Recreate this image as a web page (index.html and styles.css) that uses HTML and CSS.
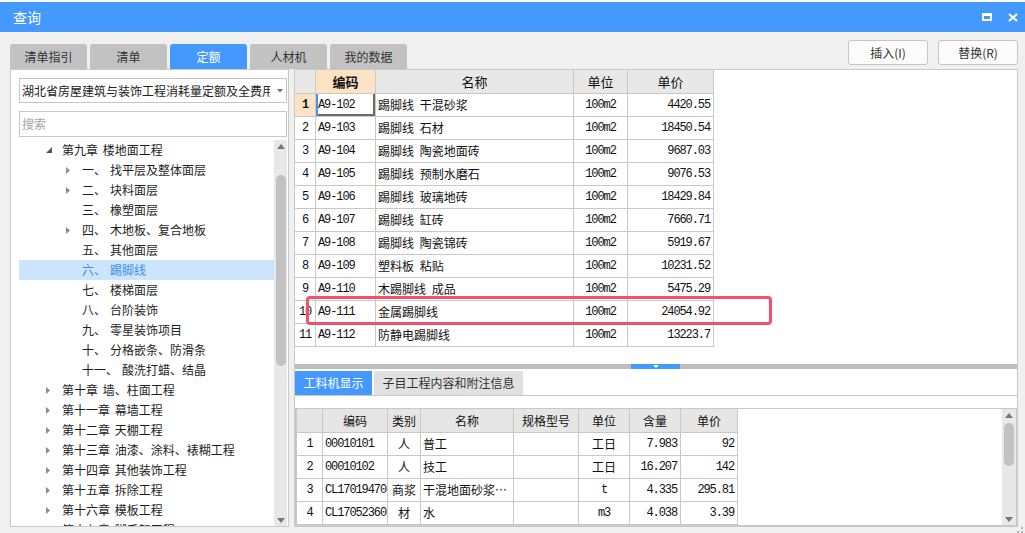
FILE: index.html
```html
<!DOCTYPE html>
<html lang="zh-CN">
<head>
<meta charset="utf-8">
<title>查询</title>
<link rel="stylesheet" href="styles.css">
</head>
<body>
<div class="window">
  <div class="topstrip"></div>
  <div class="titlebar">
    <span class="title">查询</span>
    <div class="win-icons">
      <svg class="ico" width="10" height="8" viewBox="0 0 10 8"><path fill="#fff" fill-rule="evenodd" d="M0 0H10V8H0Z M2 3H8V6H2Z"/></svg>
      <svg class="ico" width="10" height="9" viewBox="0 0 10 9"><path d="M1 1L9 8M9 1L1 8" stroke="#fff" stroke-width="2.2" fill="none"/></svg>
    </div>
  </div>

  <div class="toolbar">
    <div class="tabs">
      <div class="tab">清单指引</div>
      <div class="tab">清单</div>
      <div class="tab active">定额</div>
      <div class="tab">人材机</div>
      <div class="tab">我的数据</div>
    </div>
    <div class="actions">
      <button class="btn">插入(I)</button>
      <button class="btn">替换(R)</button>
    </div>
  </div>

  <div class="content">
    <div class="leftpane">
      <div class="select">
        <span class="select-text">湖北省房屋建筑与装饰工程消耗量定额及全费用基价表</span>
        <span class="select-arrow"><svg width="6" height="4" viewBox="0 0 6 4"><polygon points="0,0 6,0 3,3.5" fill="#707070"/></svg></span>
      </div>
      <div class="search">搜索</div>
      <div class="treewrap">
        <div class="tree">
          <div class="row l1"><span class="arr"><svg width="6" height="6" viewBox="0 0 6 6"><polygon class="exp" points="6,0 6,6 0,6"/></svg></span><span class="txt">第九章 楼地面工程</span></div>
          <div class="row l2"><span class="arr"><svg width="4" height="7" viewBox="0 0 4 7"><polygon class="col" points="0,0 4,3.5 0,7"/></svg></span><span class="lbl">一、</span><span class="txt">找平层及整体面层</span></div>
          <div class="row l2"><span class="arr"><svg width="4" height="7" viewBox="0 0 4 7"><polygon class="col" points="0,0 4,3.5 0,7"/></svg></span><span class="lbl">二、</span><span class="txt">块料面层</span></div>
          <div class="row l2"><span class="arr"></span><span class="lbl">三、</span><span class="txt">橡塑面层</span></div>
          <div class="row l2"><span class="arr"><svg width="4" height="7" viewBox="0 0 4 7"><polygon class="col" points="0,0 4,3.5 0,7"/></svg></span><span class="lbl">四、</span><span class="txt">木地板、复合地板</span></div>
          <div class="row l2"><span class="arr"></span><span class="lbl">五、</span><span class="txt">其他面层</span></div>
          <div class="row l2 selected"><span class="arr"></span><span class="lbl">六、</span><span class="txt">踢脚线</span></div>
          <div class="row l2"><span class="arr"></span><span class="lbl">七、</span><span class="txt">楼梯面层</span></div>
          <div class="row l2"><span class="arr"></span><span class="lbl">八、</span><span class="txt">台阶装饰</span></div>
          <div class="row l2"><span class="arr"></span><span class="lbl">九、</span><span class="txt">零星装饰项目</span></div>
          <div class="row l2"><span class="arr"></span><span class="lbl">十、</span><span class="txt">分格嵌条、防滑条</span></div>
          <div class="row l2"><span class="arr"></span><span class="lbl">十一、</span><span class="txt">酸洗打蜡、结晶</span></div>
          <div class="row l1"><span class="arr"><svg width="4" height="7" viewBox="0 0 4 7"><polygon class="col" points="0,0 4,3.5 0,7"/></svg></span><span class="txt">第十章 墙、柱面工程</span></div>
          <div class="row l1"><span class="arr"><svg width="4" height="7" viewBox="0 0 4 7"><polygon class="col" points="0,0 4,3.5 0,7"/></svg></span><span class="txt">第十一章 幕墙工程</span></div>
          <div class="row l1"><span class="arr"><svg width="4" height="7" viewBox="0 0 4 7"><polygon class="col" points="0,0 4,3.5 0,7"/></svg></span><span class="txt">第十二章 天棚工程</span></div>
          <div class="row l1"><span class="arr"><svg width="4" height="7" viewBox="0 0 4 7"><polygon class="col" points="0,0 4,3.5 0,7"/></svg></span><span class="txt">第十三章 油漆、涂料、裱糊工程</span></div>
          <div class="row l1"><span class="arr"><svg width="4" height="7" viewBox="0 0 4 7"><polygon class="col" points="0,0 4,3.5 0,7"/></svg></span><span class="txt">第十四章 其他装饰工程</span></div>
          <div class="row l1"><span class="arr"><svg width="4" height="7" viewBox="0 0 4 7"><polygon class="col" points="0,0 4,3.5 0,7"/></svg></span><span class="txt">第十五章 拆除工程</span></div>
          <div class="row l1"><span class="arr"><svg width="4" height="7" viewBox="0 0 4 7"><polygon class="col" points="0,0 4,3.5 0,7"/></svg></span><span class="txt">第十六章 模板工程</span></div>
          <div class="row l1"><span class="arr"><svg width="4" height="7" viewBox="0 0 4 7"><polygon class="col" points="0,0 4,3.5 0,7"/></svg></span><span class="txt">第十七章 脚手架工程</span></div>
        </div>
        <div class="vscroll">
          <div class="vs-btn"><svg width="8" height="5" viewBox="0 0 8 5"><polygon points="0,5 8,5 4,0" fill="#777"/></svg></div>
          <div class="vs-thumb tree-thumb"></div>
          <div class="vs-btn vs-end"><svg width="8" height="5" viewBox="0 0 8 5"><polygon points="0,0 8,0 4,5" fill="#777"/></svg></div>
        </div>
      </div>
    </div>

    <div class="rightpane">
      <div class="toparea">
        <table class="grid topgrid">
          <colgroup><col class="w21"><col class="w60"><col class="w198"><col class="w54"><col class="w86"></colgroup>
          <thead>
            <tr><th class="corner"></th><th class="hl">编码</th><th>名称</th><th>单位</th><th>单价</th></tr>
          </thead>
          <tbody>
            <tr><td class="rn cur">1</td><td class="code sel">A9-102</td><td class="name">踢脚线 干混砂浆</td><td class="unit">100m2</td><td class="price">4420.55</td></tr>
            <tr><td class="rn">2</td><td class="code">A9-103</td><td class="name">踢脚线 石材</td><td class="unit">100m2</td><td class="price">18450.54</td></tr>
            <tr><td class="rn">3</td><td class="code">A9-104</td><td class="name">踢脚线 陶瓷地面砖</td><td class="unit">100m2</td><td class="price">9687.03</td></tr>
            <tr><td class="rn">4</td><td class="code">A9-105</td><td class="name">踢脚线 预制水磨石</td><td class="unit">100m2</td><td class="price">9076.53</td></tr>
            <tr><td class="rn">5</td><td class="code">A9-106</td><td class="name">踢脚线 玻璃地砖</td><td class="unit">100m2</td><td class="price">18429.84</td></tr>
            <tr><td class="rn">6</td><td class="code">A9-107</td><td class="name">踢脚线 缸砖</td><td class="unit">100m2</td><td class="price">7660.71</td></tr>
            <tr><td class="rn">7</td><td class="code">A9-108</td><td class="name">踢脚线 陶瓷锦砖</td><td class="unit">100m2</td><td class="price">5919.67</td></tr>
            <tr><td class="rn">8</td><td class="code">A9-109</td><td class="name">塑料板 粘贴</td><td class="unit">100m2</td><td class="price">10231.52</td></tr>
            <tr><td class="rn">9</td><td class="code">A9-110</td><td class="name">木踢脚线 成品</td><td class="unit">100m2</td><td class="price">5475.29</td></tr>
            <tr><td class="rn">10</td><td class="code">A9-111</td><td class="name">金属踢脚线</td><td class="unit">100m2</td><td class="price">24054.92</td></tr>
            <tr><td class="rn">11</td><td class="code">A9-112</td><td class="name">防静电踢脚线</td><td class="unit">100m2</td><td class="price">13223.7</td></tr>
          </tbody>
        </table>
      </div>
      <div class="splitter"><div class="split-handle"><svg width="6" height="3" viewBox="0 0 6 3"><polygon points="0,0 6,0 3,3" fill="#fff"/></svg></div></div>
      <div class="bottomarea">
        <div class="btabs">
          <div class="btab active">工料机显示</div>
          <div class="btab">子目工程内容和附注信息</div>
        </div>
        <div class="bstrip"></div>
        <div class="gridbox">
          <table class="grid botgrid">
            <colgroup><col class="w26"><col class="w65"><col class="w33"><col class="w93"><col class="w65"><col class="w51"><col class="w51"><col class="w57"></colgroup>
            <thead>
              <tr><th></th><th>编码</th><th>类别</th><th>名称</th><th>规格型号</th><th>单位</th><th>含量</th><th>单价</th></tr>
            </thead>
            <tbody>
              <tr><td class="rn">1</td><td class="code">00010101</td><td class="cat">人</td><td class="name">普工</td><td></td><td class="cat">工日</td><td class="price">7.983</td><td class="price">92</td></tr>
              <tr><td class="rn">2</td><td class="code">00010102</td><td class="cat">人</td><td class="name">技工</td><td></td><td class="cat">工日</td><td class="price">16.207</td><td class="price">142</td></tr>
              <tr><td class="rn">3</td><td class="code">CL17019470</td><td class="cat">商浆</td><td class="name">干混地面砂浆…</td><td></td><td class="unit">t</td><td class="price">4.335</td><td class="price">295.81</td></tr>
              <tr><td class="rn">4</td><td class="code">CL17052360</td><td class="cat">材</td><td class="name">水</td><td></td><td class="unit">m3</td><td class="price">4.038</td><td class="price">3.39</td></tr>
            </tbody>
          </table>
          <div class="vscroll small">
            <div class="vs-btn"><svg width="8" height="5" viewBox="0 0 8 5"><polygon points="0,5 8,5 4,0" fill="#777"/></svg></div>
            <div class="vs-thumb grid-thumb"></div>
            <div class="vs-btn vs-end"><svg width="8" height="5" viewBox="0 0 8 5"><polygon points="0,0 8,0 4,5" fill="#777"/></svg></div>
          </div>
        </div>
      </div>
      <div class="redbox"></div>
    </div>
  </div>

  <div class="footer">
    <svg width="6" height="6" viewBox="0 0 6 6"><rect x="4" y="0" width="2" height="2" fill="#b0b0b0"/><rect x="0" y="4" width="2" height="2" fill="#b0b0b0"/><rect x="4" y="4" width="2" height="2" fill="#b0b0b0"/></svg>
  </div>
</div>
</body>
</html>
```

FILE: styles.css
```css
* { box-sizing: border-box; }
html, body { margin: 0; padding: 0; }
body {
  width: 1025px;
  height: 533px;
  overflow: hidden;
  background: #f0f0f0;
  font-family: "Noto Sans CJK SC", "Microsoft YaHei", sans-serif;
  font-size: 12px;
  color: #222;
}
.window { display: flex; flex-direction: column; height: 533px; }
.topstrip { height: 2px; background: #fbfbfb; }

.titlebar {
  height: 30px;
  background: #4499ff;
  display: flex;
  align-items: center;
  padding-left: 13px;
  color: #fff;
}
.title { font-size: 14px; line-height: 30px; }
.win-icons { margin-left: auto; display: flex; align-items: center; gap: 16px; padding-right: 7px; }
.ico { display: block; }

.toolbar { height: 37px; display: flex; padding-left: 10px; padding-right: 7px; }
.tabs { display: flex; align-self: flex-end; gap: 3px; }
.tab {
  width: 77px;
  height: 25px;
  line-height: 25px;
  text-align: center;
  background: #c2c2c2;
  color: #333;
  border-radius: 3px 3px 0 0;
  font-size: 12px;
}
.tab.active { background: #4499ff; color: #fff; }
.actions { margin-left: auto; margin-top: 8px; display: flex; gap: 10px; height: 25px; }
.btn {
  width: 80px;
  height: 25px;
  border: 1px solid #c6c6c6;
  border-radius: 3px;
  background: #fcfcfc;
  font-family: "Noto Sans CJK SC", sans-serif;
  font-size: 12px;
  color: #333;
  padding: 0;
}

.content { height: 458px; display: flex; padding-left: 10px; }

.leftpane {
  width: 279px;
  border: 1px solid #cacaca;
  background: #fff;
  display: flex;
  flex-direction: column;
  padding: 8px 1px 0 8px;
}
.select {
  height: 25px;
  border: 1px solid #c6c6c6;
  display: flex;
  align-items: center;
  padding-left: 2px;
}
.select-text {
  width: 248px;
  overflow: hidden;
  white-space: nowrap;
  color: #222;
  line-height: 23px;
}
.select-arrow { flex: 1; display: flex; align-items: center; padding-left: 7px; }
.select-arrow svg { display: block; }
.search {
  margin-top: 8px;
  height: 26px;
  border: 1px solid #c6c6c6;
  padding-left: 2px;
  line-height: 24px;
  color: #a5a5a5;
}
.treewrap { margin-top: 3px; flex: 1; display: flex; overflow: hidden; }
.tree { flex: 1; overflow: hidden; }
.row {
  height: 20px;
  line-height: 20px;
  display: flex;
  align-items: center;
  white-space: nowrap;
  color: #1e1e1e;
  word-spacing: 2px;
}
.row.l1 { padding-left: 27px; }
.row.l2 { padding-left: 47px; }
.arr { width: 16px; height: 20px; display: flex; align-items: center; flex-shrink: 0; }
.arr svg { display: block; }
.exp { fill: #555; }
.col { fill: #8c8c8c; }
.lbl { min-width: 24px; margin-right: 4px; }
.row.selected { background: #cce5fc; color: #3d8ee8; }

.vscroll {
  width: 13px;
  background: #e8e8e8;
  display: flex;
  flex-direction: column;
  align-items: center;
}
.vs-btn { height: 12px; display: flex; align-items: center; justify-content: center; flex-shrink: 0; }
.vs-btn svg { display: block; }
.vs-end { margin-top: auto; }
.vs-thumb { width: 10px; border-radius: 5px; background: #c2c2c2; flex-shrink: 0; }
.tree-thumb { height: 191px; margin-top: 23px; }

.rightpane {
  position: relative;
  margin-left: 5px;
  width: 724px;
  border: 1px solid #c9c9c9;
  background: #fff;
  display: flex;
  flex-direction: column;
}
.toparea { height: 295px; }

.grid {
  border-collapse: separate;
  border-spacing: 0;
  table-layout: fixed;
}
.grid th, .grid td {
  border-right: 1px solid #c8c8c8;
  border-bottom: 1px solid #c8c8c8;
  padding: 0;
  white-space: nowrap;
  overflow: hidden;
  line-height: 16px;
  color: #111;
}
.grid th { font-weight: normal; background: #e8e8e8; text-align: center; }
.topgrid { width: 419px; }
.topgrid thead tr { height: 24px; }
.topgrid tbody tr { height: 23px; }
.topgrid th { font-size: 13px; }
.grid th.hl { background: #fde3c4; font-weight: bold; }

.w21 { width: 21px; }
.w26 { width: 26px; }
.w33 { width: 33px; }
.w51 { width: 51px; }
.w54 { width: 54px; }
.w57 { width: 57px; }
.w60 { width: 60px; }
.w65 { width: 65px; }
.w86 { width: 86px; }
.w93 { width: 93px; }
.w198 { width: 198px; }

.rn, .code, .unit, .price {
  font-family: "Liberation Mono", "DejaVu Sans Mono", monospace;
  font-size: 12px;
  letter-spacing: -1.1px;
}
.rn { text-align: center; }
.rn.cur { background: #fde3c4; font-weight: bold; }
.grid .code { padding-left: 2px; }
.grid .name { padding-left: 2px; font-size: 12px; word-spacing: 3px; }
.unit { text-align: center; }
.grid .price { text-align: right; padding-right: 3px; }
.cat { text-align: center; font-size: 12px; }
.sel { box-shadow: inset 2px 0 0 #4a94ef, inset -2px -2px 0 #6c6c6c; }

.splitter { height: 5px; background: #bebebe; display: flex; flex-shrink: 0; }
.split-handle {
  margin-left: 336px;
  width: 49px;
  background: #4499ff;
  display: flex;
  align-items: center;
  justify-content: center;
}
.split-handle svg { display: block; }

.bottomarea { flex: 1; display: flex; flex-direction: column; }
.btabs { height: 25px; margin-top: 2px; display: flex; gap: 2px; border-bottom: 1px solid #c8c8c8; flex-shrink: 0; }
.btab {
  height: 24px;
  line-height: 24px;
  width: 149px;
  text-align: center;
  background: #e1e1e1;
  color: #333;
  font-size: 12px;
}
.btab.active { width: 77px; background: #4499ff; color: #fff; }
.bstrip { height: 12px; flex-shrink: 0; }
.gridbox {
  flex: 1;
  border: 1px solid #c8c8c8;
  display: flex;
  overflow: hidden;
}
.botgrid { width: 442px; border-left: 1px solid #c8c8c8; align-self: flex-start; }
.botgrid thead tr { height: 24px; }
.botgrid tbody tr { height: 23px; }
.botgrid th { background: #e6e6e6; font-size: 12px; }
.vscroll.small { width: 14px; margin-left: auto; }
.grid-thumb { height: 43px; margin-top: 2px; }

.redbox {
  position: absolute;
  left: 11px;
  top: 226px;
  width: 466px;
  height: 29px;
  border: 3px solid #f5506b;
  border-radius: 4px;
}

.footer { height: 6px; display: flex; justify-content: flex-end; align-items: flex-end; padding-right: 2px; }
.footer svg { display: block; }
```
